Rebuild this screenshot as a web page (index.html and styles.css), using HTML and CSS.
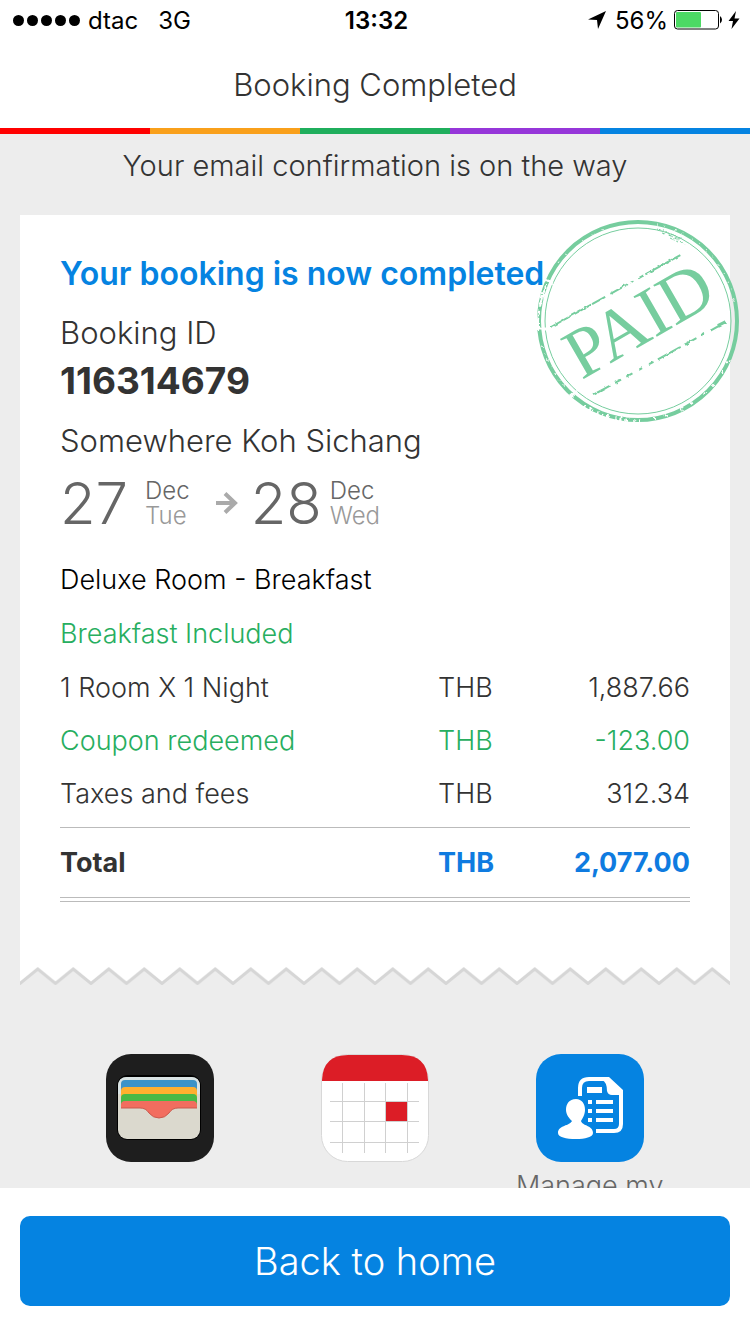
FILE: index.html
```
<!DOCTYPE html>
<html lang="en">

<head>
    <meta charset="UTF-8">
    <meta name="viewport" content="width=device-width, initial-scale=1.0">
    <title>Booking Completed</title>
    <link rel="stylesheet" href="styles.css">
</head>

<body>
    <div class="status-bar">
        <div class="status-left">
            <span class="signal"><i></i><i></i><i></i><i></i><i></i></span>
            <span>dtac</span>
            <span class="network">3G</span>
        </div>
        <div class="status-time">13:32</div>
        <div class="status-right">
            <svg class="location" width="20" height="20" viewBox="0 0 20 20" aria-hidden="true">
                <path d="M19 1 L11 19 L10 10 L1 9.500 Z" />
            </svg>
            <span>56%</span>
            <svg width="48" height="20" viewBox="0 0 48 20" aria-hidden="true">
                <rect x="0.500" y="0.500" width="44" height="18.500" rx="3" fill="#fff" stroke="#000" />
                <rect x="2" y="2" width="25" height="15.500" rx="1" fill="#4cd964" />
                <path d="M46 6 Q50 9.700 46 13.500 Z" />
            </svg>
            <svg width="12" height="20" viewBox="0 0 12 20" aria-hidden="true">
                <path d="M8 1 L0.500 11 H5 L3.500 19 L11.500 8.500 H6.500 Z" />
            </svg>
        </div>
    </div>

    <header class="header">
        <h1>Booking Completed</h1>
    </header>
    <div class="stripes"><i></i><i></i><i></i><i></i><i></i></div>

    <main class="content">
        <p class="notice">Your email confirmation is on the way</p>

        <section class="receipt">
            <svg class="stamp" width="204" height="204" viewBox="0 0 204 204" role="img" aria-label="Paid">
                <defs>
                    <filter id="rough" x="-5%" y="-5%" width="110%" height="110%">
                        <feTurbulence type="fractalNoise" baseFrequency="0.300" numOctaves="2" seed="4" />
                        <feDisplacementMap in="SourceGraphic" scale="5" xChannelSelector="R" yChannelSelector="G" />
                    </filter>
                    <filter id="worn" x="-5%" y="-5%" width="110%" height="110%">
                        <feTurbulence type="fractalNoise" baseFrequency="0.200" numOctaves="2" seed="7" />
                        <feDisplacementMap in="SourceGraphic" scale="3" xChannelSelector="R" yChannelSelector="G" />
                    </filter>
                    <mask id="wear" maskUnits="userSpaceOnUse" x="0" y="0" width="204" height="204">
                        <rect width="204" height="204" fill="#fff" />
                        <g fill="none" stroke="#000" filter="url(#rough)">
                            <path d="M11 65 A99 99 0 0 0 2 112" stroke-width="2" stroke-dasharray="24 3" />
                            <path d="M6 126 A99 99 0 0 0 38 176" stroke-width="1" stroke-dasharray="3 6 1 5" />
                            <path d="M48 187 A99 99 0 0 0 108 202" stroke-width="4" stroke-dasharray="2 4 3 6 1 3" />
                            <path d="M118 199 A99 99 0 0 0 196 132" stroke-width="2" stroke-dasharray="2 9 3 14" />
                            <path d="M22 44 A99 99 0 0 1 70 10" stroke-width="1" stroke-dasharray="2 9" />
                            <path d="M120 5 A99 99 0 0 1 198 82" stroke-width="1" stroke-dasharray="2 7 1 9" />
                            <path d="M6 59 L18 65 M0 110 L12 110 M34 178 L42 172" stroke-width="3" />
                        </g>
                    </mask>
                </defs>
                <g fill="none" stroke="#76cd9e" mask="url(#wear)">
                    <circle cx="102" cy="102" r="99" stroke-width="4" />
                    <circle cx="102" cy="102" r="93" stroke-width="1" />
                </g>
                <g fill="none" stroke="#76cd9e" filter="url(#worn)">
                    <path d="M15 108 L148 34" stroke-width="2" stroke-dasharray="46 1 15 6 20 3 2 7 6 2 40" />
                    <path d="M57 176 L190 103" stroke-width="2" stroke-dasharray="20 5 7 6 7 8 3 8 5 5 26 4 14 6 3 7" />
                    <path d="M182 107 L190 103" stroke-width="4" />
                    <path d="M122 10 L148 20 M126 14 L144 20 M132 15 L150 26 M134 19 L142 23" stroke-width="1" stroke-dasharray="3 1 1 2" />
                </g>
                <text class="stamp-text" x="103" y="125" text-anchor="middle" transform="rotate(-30 102 102)">PAID</text>
            </svg>

            <h2>Your booking is now completed</h2>
            <p class="booking-label">Booking ID</p>
            <p class="booking-id">116314679</p>
            <p class="hotel">Somewhere Koh Sichang</p>

            <div class="dates">
                <span class="day">27</span>
                <span class="month">Dec<small>Tue</small></span>
                <svg class="arrow" width="22" height="22" viewBox="0 0 22 22" aria-hidden="true">
                    <path d="M0 11 H19 M9 1.500 L19 11 L9 20.500" fill="none" stroke="#aaa" stroke-width="4" />
                </svg>
                <span class="day">28</span>
                <span class="month">Dec<small>Wed</small></span>
            </div>

            <p class="room">Deluxe Room - Breakfast</p>
            <p class="room green">Breakfast Included</p>

            <table class="prices">
                <tbody>
                    <tr>
                        <th scope="row">1 Room X 1 Night</th>
                        <td>THB</td>
                        <td class="amount">1,887.66</td>
                    </tr>
                    <tr class="green">
                        <th scope="row">Coupon redeemed</th>
                        <td>THB</td>
                        <td class="amount">-123.00</td>
                    </tr>
                    <tr>
                        <th scope="row">Taxes and fees</th>
                        <td>THB</td>
                        <td class="amount">312.34</td>
                    </tr>
                </tbody>
            </table>
            <table class="prices total">
                <tbody>
                    <tr>
                        <th scope="row">Total</th>
                        <td>THB</td>
                        <td class="amount">2,077.00</td>
                    </tr>
                </tbody>
            </table>
        </section>
        <svg class="torn-edge" viewBox="0 0 1420 40" preserveAspectRatio="none" aria-hidden="true">
            <defs>
                <pattern id="zigzag" width="71" height="40" patternUnits="userSpaceOnUse">
                    <path d="M0 0 V38 L35.500 8 L71 38 V0 Z" fill="#fff" />
                    <path d="M-35.500 8 L0 37 L35.500 8 L71 37 L106.500 8" fill="none" stroke="#d6d6d6" stroke-width="6" />
                </pattern>
            </defs>
            <rect width="1420" height="40" fill="url(#zigzag)" />
        </svg>

        <nav class="actions">
            <a href="#wallet" aria-label="Wallet">
                <svg width="108" height="108" viewBox="0 0 108 108" aria-hidden="true">
                    <rect width="108" height="108" rx="25" fill="#1e1e1e" />
                    <rect x="11" y="21" width="84" height="65" rx="11" fill="#000" />
                    <rect x="12" y="23" width="82" height="62" rx="9" fill="#dbd9ce" />
                    <path d="M12 40 V32 Q12 23 21 23 H85 Q94 23 94 32 V40 H91 V30 Q91 26 87 26 H19 Q15 26 15 30 V40 Z" fill="#d9e3e4" />
                    <path d="M15 54 V30 Q15 26 19 26 H87 Q91 26 91 30 V54 Z" fill="#3b93c8" />
                    <path d="M15 54 V37 Q15 33 19 33 H87 Q91 33 91 37 V54 Z" fill="#ffb02f" />
                    <path d="M15 54 V44 Q15 40 19 40 H87 Q91 40 91 44 V54 Z" fill="#48b946" />
                    <path d="M15 54 V51 Q15 47 19 47 H87 Q91 47 91 51 V54 H72 Q66 54 63 59 Q59 64 53 64 Q47 64 43 59 Q40 54 34 54 Z" fill="#f26d5f" />
                    <path d="M15 54 H34 Q40 54 43 59 Q47 64 53 64 Q59 64 63 59 Q66 54 72 54 H91" fill="none" stroke="#c95a4e" stroke-width="1" />
                </svg>
            </a>
            <a href="#calendar" aria-label="Calendar">
                <svg width="108" height="108" viewBox="0 0 108 108" aria-hidden="true">
                    <rect x="0.500" y="0.500" width="107" height="107" rx="26" fill="#fff" stroke="#d8d8d8" />
                    <path d="M1 27 V26 Q2 1 27 1 H81 Q106 1 107 26 V27 Z" fill="#dc1d26" />
                    <path d="M21.500 29 V99 M43.500 29 V99 M64.500 29 V99 M86.500 29 V99 M9 47.500 H98 M9 67.500 H98 M9 88.500 H98" stroke="#d0d0d0" />
                    <rect x="65" y="48" width="21" height="19" fill="#dc1d26" />
                </svg>
            </a>
            <a href="#manage">
                <svg width="108" height="108" viewBox="0 0 108 108" aria-hidden="true">
                    <rect width="108" height="108" rx="25" fill="#0583e1" />
                    <path d="M44 42 V34 Q44 25 53 25 H70 L85 39 V70 Q85 77 78 77 H60" fill="none" stroke="#fff" stroke-width="4" />
                    <path d="M68 23 H73 L87 36 V41 H76 Q72 41 71 37 Q71 28 66 26 Z" fill="#fff" />
                    <path d="M51 33 H66 V39 H51 Z M52 46 H56 V50 H52 Z M60 46 H77 V50 H60 Z M52 55 H56 V59 H52 Z M60 55 H77 V59 H60 Z M52 64 H56 V68 H52 Z M60 64 H77 V68 H60 Z" fill="#fff" />
                    <path d="M40 45 C46 45 49 50 49 56 C49 61 46 65 45 67 C46 72 57 71 57 79 C57 83 49 85 40 85 C30 85 22 83 22 79 C22 71 34 72 36 67 C34 65 30 61 30 56 C30 50 33 45 40 45 Z" fill="#fff" />
                </svg>
                <span>Manage my</span>
            </a>
        </nav>
    </main>

    <footer class="footer">
        <button type="button" class="home-button">Back to home</button>
    </footer>
</body>

</html>
```
FILE: styles.css
```
:root {
    --bg: #ededed;
    --blue: #0583e1;
    --green: #27ae60;
    --text: #333;
    --line: #bbb;
}

* {
    box-sizing: border-box;
    margin: 0;
    padding: 0;
}

body {
    display: flex;
    flex-direction: column;
    height: 100vh;
    background: #fff;
    color: var(--text);
    font-family: Inter, 'Liberation Sans', sans-serif;
    font-size: 27px;
    font-weight: 300;
}

svg {
    display: block;
}

.status-bar {
    display: grid;
    grid-template-columns: 1fr auto 1fr;
    align-items: center;
    height: 40px;
    padding: 0 10px 0 13px;
    color: #000;
    font-size: 24px;
    font-weight: 400;
}

.status-left,
.status-right {
    display: flex;
    align-items: center;
    gap: 8px;
}

.status-right {
    justify-content: flex-end;
    gap: 6px;
}

.signal {
    display: flex;
    gap: 3px;
}

.signal i {
    width: 11px;
    height: 11px;
    border-radius: 50%;
    background: #000;
}

.network {
    margin-left: 12px;
}

.status-time {
    font-weight: 600;
}

.location {
    margin-right: 2px;
}

.header {
    display: flex;
    align-items: center;
    justify-content: center;
    height: 88px;
}

h1 {
    font-size: 31px;
    font-weight: 300;
}

.stripes {
    display: flex;
    flex: none;
    height: 6px;
}

.stripes i {
    flex: 1;
    background: #ff0000;
}

.stripes i:nth-child(2) {
    background: #f9a01b;
}

.stripes i:nth-child(3) {
    background: #1fae5c;
}

.stripes i:nth-child(4) {
    background: #9636d9;
}

.stripes i:nth-child(5) {
    background: var(--blue);
}

.content {
    flex: 1;
    min-height: 0;
    padding: 0 20px;
    overflow-y: auto;
    scrollbar-width: none;
    background: var(--bg);
}

.notice {
    padding: 12px 0 29px;
    font-size: 29px;
    line-height: 40px;
    text-align: center;
}

.receipt {
    position: relative;
    padding: 40px 40px 63px;
    background: #fff;
}

.stamp {
    position: absolute;
    top: 4px;
    right: -10px;
}

.stamp-text {
    fill: #76cd9e;
    font-family: 'Liberation Serif', serif;
    font-size: 71px;
    font-weight: 400;
}

h2 {
    color: var(--blue);
    font-size: 32px;
    font-weight: 600;
    line-height: 38px;
}

.booking-label {
    margin-top: 20px;
    font-size: 31px;
    line-height: 40px;
}

.booking-id {
    margin-top: 8px;
    font-size: 37px;
    font-weight: 700;
    line-height: 40px;
}

.hotel {
    margin-top: 20px;
    font-size: 31px;
    line-height: 40px;
}

.dates {
    display: flex;
    align-items: center;
    height: 60px;
    margin: 12px 0 20px;
    color: #666;
}

.day {
    font-size: 58px;
    line-height: 60px;
}

.month {
    margin-left: 8px;
    font-size: 24px;
    line-height: 25px;
}

.day:first-child + .month {
    margin-left: 17px;
}

.month small {
    display: block;
    color: #999;
    font-size: 24px;
}

.arrow {
    margin: 0 13px 0 26px;
}

.room {
    color: #000;
    line-height: 54px;
}

.prices {
    width: 100%;
    border-spacing: 0;
    table-layout: fixed;
}

.prices th,
.prices td {
    height: 53px;
    font-weight: 300;
    text-align: left;
}

.prices th {
    width: 60%;
}

.prices .amount {
    text-align: right;
}

.green,
.room.green {
    color: var(--green);
}

.total {
    margin-top: 7px;
    padding-bottom: 3px;
    border-top: 1px solid var(--line);
    border-bottom: 1px solid var(--line);
}

.total th,
.total td {
    height: 70px;
    border-bottom: 1px solid var(--line);
    font-weight: 700;
}

.total td {
    color: #0f7be0;
}

.torn-edge {
    width: 100%;
    height: 20px;
}

.actions {
    display: grid;
    grid-template-columns: repeat(3, 1fr);
    padding: 69px 33px 20px;
}

.actions a {
    display: flex;
    flex-direction: column;
    align-items: center;
    gap: 8px;
    color: #666;
    line-height: 32px;
    text-decoration: none;
}

.footer {
    padding: 28px 20px;
}

.home-button {
    display: block;
    width: 100%;
    height: 90px;
    border: none;
    border-radius: 10px;
    background: var(--blue);
    color: #fff;
    font: inherit;
    font-size: 38px;
    cursor: pointer;
}
```
